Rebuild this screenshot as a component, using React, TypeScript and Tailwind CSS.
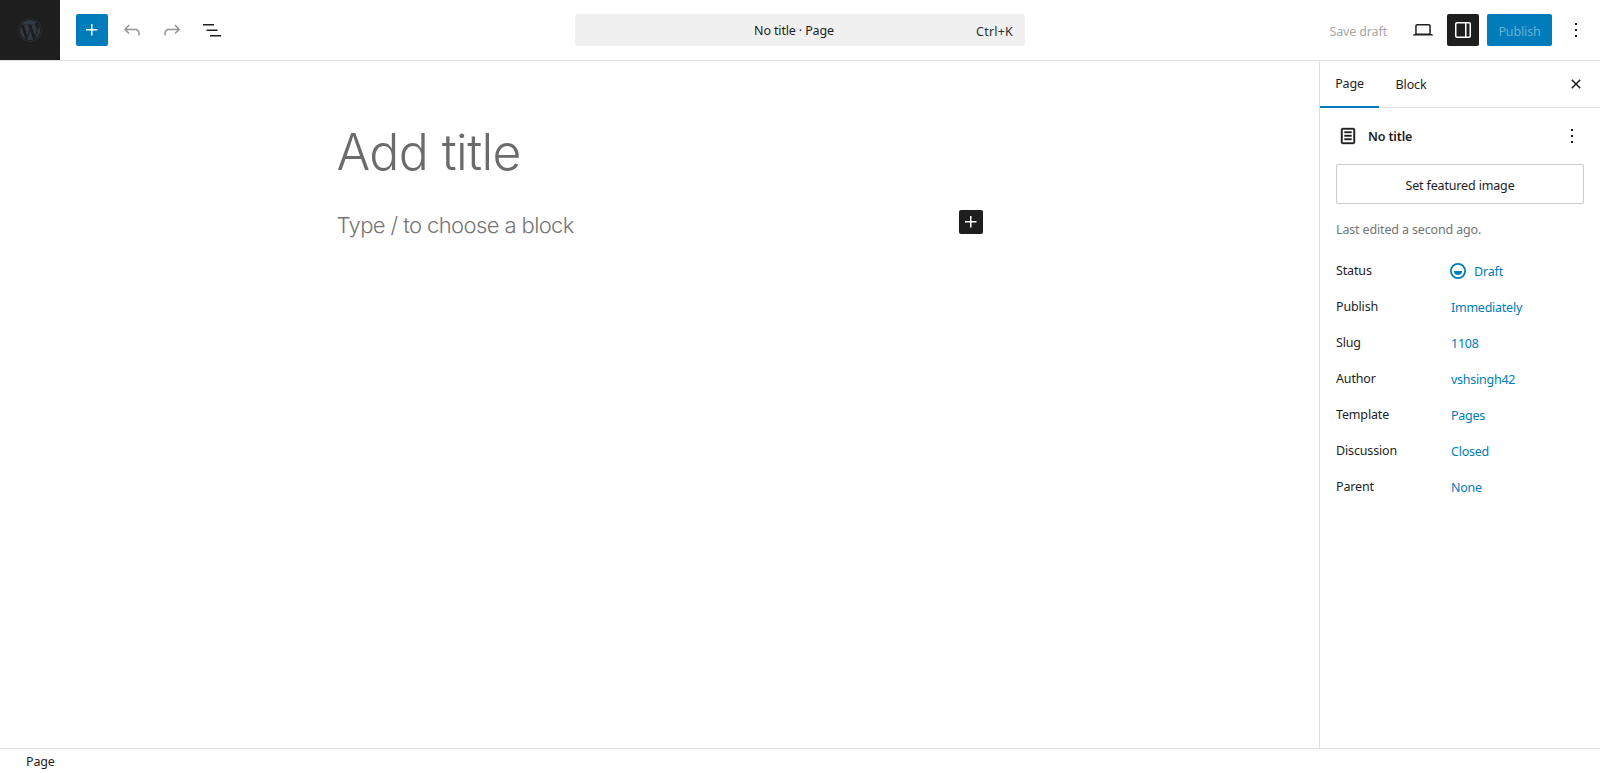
import React from "react";
import { FaWordpress } from "react-icons/fa";

const Ic = ({ d, className = "", size = 24 }: { d: string | string[]; className?: string; size?: number }) => (
  <svg viewBox="0 0 24 24" width={size} height={size} className={"fill-current shrink-0 " + className}>
    {(Array.isArray(d) ? d : [d]).map((p, i) => (
      <path key={i} d={p} fillRule="evenodd" clipRule="evenodd" />
    ))}
  </svg>
);

const plus = "M11 12.5V17.5H12.5V12.5H17.5V11H12.5V6H11V11H6V12.5H11Z";
const undo = "M18.3 11.7c-.6-.6-1.4-.9-2.3-.9H6.7l2.9-3.3-1.1-1-4.5 5L8.5 16l1-1-2.7-2.7H16c.5 0 .9.2 1.3.5 1 1 1 3.4 1 4.5v.3h1.5v-.2c0-1.5 0-4.3-1.5-5.7z";
const redo = "M15.6 6.5l-1.1 1 2.9 3.3H8c-.9 0-1.7.3-2.3.9-1.4 1.5-1.4 4.2-1.4 5.6v.2h1.5v-.3c0-1.1 0-3.5 1-4.5.3-.3.7-.5 1.3-.5h9.2L14.5 15l1.1 1.1 4.6-4.6-4.6-5z";
const listView = "M3 6h11v1.5H3V6Zm3.5 5.5h11V13h-11v-1.5ZM21 17H10v1.5h11V17Z";
const desktop = "M20.5 16h-.7V8c0-1.1-.9-2-2-2H6.2c-1.1 0-2 .9-2 2v8h-.7c-.8 0-1.5.7-1.5 1.5h20c0-.8-.7-1.5-1.5-1.5zM5.7 8c0-.3.2-.5.5-.5h11.6c.3 0 .5.2.5.5v7.6H5.7V8z";
const drawerRight = "M18 4H6c-1.1 0-2 .9-2 2v12c0 1.1.9 2 2 2h12c1.1 0 2-.9 2-2V6c0-1.1-.9-2-2-2zm-4 14.5H6c-.3 0-.5-.2-.5-.5V6c0-.3.2-.5.5-.5h8v13zm4.5-.5c0 .3-.2.5-.5.5h-2.5v-13H18c.3 0 .5.2.5.5v12z";
const more = "M13 19h-2v-2h2v2zm0-6h-2v-2h2v2zm0-6h-2V5h2v2z";
const closeSmall = "M12 13.06l3.712 3.713 1.061-1.06L13.061 12l3.712-3.712-1.06-1.06L12 10.938 8.288 7.227l-1.061 1.06L10.939 12l-3.712 3.712 1.06 1.061L12 13.061z";
const page = [
  "M15.5 7.5h-7V9h7V7.5Zm-7 3.5h7v1.5h-7V11Zm7 3.5h-7V16h7v-1.5Z",
  "M17 4H7a2 2 0 0 0-2 2v12a2 2 0 0 0 2 2h10a2 2 0 0 0 2-2V6a2 2 0 0 0-2-2ZM7 5.5h10a.5.5 0 0 1 .5.5v12a.5.5 0 0 1-.5.5H7a.5.5 0 0 1-.5-.5V6a.5.5 0 0 1 .5-.5Z",
];

const rows: [string, string][] = [
  ["Publish", "Immediately"],
  ["Slug", "1108"],
  ["Author", "vshsingh42"],
  ["Template", "Pages"],
  ["Discussion", "Closed"],
  ["Parent", "None"],
];

export default function App() {
  return (
    <div className="h-[773px] w-[1600px] flex flex-col overflow-hidden bg-white text-[#1e1e1e] text-[12.5px] tracking-[-0.15px] font-['Noto_Sans',sans-serif]">
      <header className="h-[61px] shrink-0 flex items-center border-b border-[#e0e0e0]">
        <div className="w-[60px] h-[60px] bg-[#1e1e1e] flex items-center justify-center">
          <FaWordpress size={24} className="text-[#333940]" />
        </div>
        <div className="w-[32px] h-[32px] ml-4 bg-[#007cba] rounded-[2px] text-white flex items-center justify-center">
          <Ic d={plus} />
        </div>
        <div className="flex items-center ml-2 gap-2">
          <div className="w-8 h-8 flex items-center justify-center text-[#949494]"><Ic d={undo} /></div>
          <div className="w-8 h-8 flex items-center justify-center text-[#949494]"><Ic d={redo} /></div>
          <div className="w-8 h-8 flex items-center justify-center"><Ic d={listView} /></div>
        </div>
        <div className="ml-[347px] w-[450px] h-8 bg-[#f0f0f0] rounded-[4px] flex items-center relative">
          <span className="w-full text-center pr-[12px] pt-[2px]">No title · Page</span>
          <span className="absolute right-3 top-[9px] text-[#2f2f2f] tracking-[0.2px]">Ctrl+K</span>
        </div>
        <div className="ml-auto flex items-center">
          <span className="text-[#a7a7a7] mr-[20px] pt-[4px]">Save draft</span>
          <div className="w-8 h-8 flex items-center justify-center"><Ic d={desktop} /></div>
          <div className="w-8 h-8 ml-2 bg-[#1e1e1e] rounded-[2px] text-white flex items-center justify-center"><Ic d={drawerRight} /></div>
          <div className="w-[65px] h-8 ml-2 pt-[4px] bg-[#007cba] rounded-[2px] text-[#66b0d6] flex items-center justify-center">Publish</div>
          <div className="w-6 ml-3 mr-3 flex items-center justify-center"><Ic d={more} /></div>
        </div>
      </header>

      <div className="flex-1 flex min-h-0">
        <main className="flex-1 min-w-0 flex flex-col items-center">
          <div className="w-[646px] pl-px pt-[56px]">
            <h1 className="-ml-px text-[50px] leading-[70px] font-light text-[#6b6b6b] font-['Inter',sans-serif] tracking-[-0.6px]">Add title</h1>
            <div className="flex items-center justify-between mt-[19px] h-[32px]">
              <p className="-ml-px pt-[6px] text-[22px] font-light text-[#757575] font-['Inter',sans-serif] tracking-[-0.6px]">Type / to choose a block</p>
              <div className="w-6 h-6 bg-[#1e1e1e] rounded-[2px] text-white flex items-center justify-center">
                <Ic d={plus} />
              </div>
            </div>
          </div>
        </main>

        <aside className="w-[281px] shrink-0 border-l border-[#e0e0e0] flex flex-col">
          <div className="h-[47px] shrink-0 flex items-center border-b border-[#e0e0e0] relative">
            <div className="h-[47px] w-[59px] pt-[2px] flex items-center justify-center border-b-2 border-[#007cba] -mb-px">Page</div>
            <div className="h-[47px] w-[64px] pt-[2px] flex items-center justify-center">Block</div>
            <div className="ml-auto mr-[12px] w-6 h-6"><Ic d={closeSmall} size={24} /></div>
          </div>
          <div className="px-4 pt-[16px]">
            <div className="flex items-center h-[24px]">
              <Ic d={page} className="stroke-current stroke-[0.4px]" />
              <span className="ml-2 font-semibold pt-[2px]">No title</span>
              <Ic d={more} className="ml-auto" />
            </div>
            <div className="mt-[16px] h-[40px] pt-[4px] border border-[#cccccc] rounded-[2px] flex items-center justify-center">Set featured image</div>
            <p className="mt-[17px] text-[#757575]">Last edited a second ago.</p>
            <div className="mt-[15px] flex items-center h-[36px]">
              <span className="w-[114px] -translate-y-px">Status</span>
              <svg viewBox="0 0 16 16" width={16} height={16} className="text-[#007cba] shrink-0 -translate-y-[2px]">
                <circle cx="8" cy="8" r="7.1" fill="none" stroke="currentColor" strokeWidth="1.8" />
                <path d="M4 8h8a4 4 0 0 1-8 0z" fill="currentColor" />
              </svg>
              <span className="ml-2 text-[#007cba]">Draft</span>
            </div>
            {rows.map(([k, v]) => (
              <div key={k} className="flex items-center h-[36px]">
                <span className="w-[115px] -translate-y-px">{k}</span>
                <span className="text-[#007cba] tracking-[-0.25px]">{v}</span>
              </div>
            ))}
          </div>
        </aside>
      </div>

      <footer className="h-[25px] shrink-0 border-t border-[#e0e0e0] flex items-center pl-[26px] pt-[2px]">
        <span>Page</span>
      </footer>
    </div>
  );
}
